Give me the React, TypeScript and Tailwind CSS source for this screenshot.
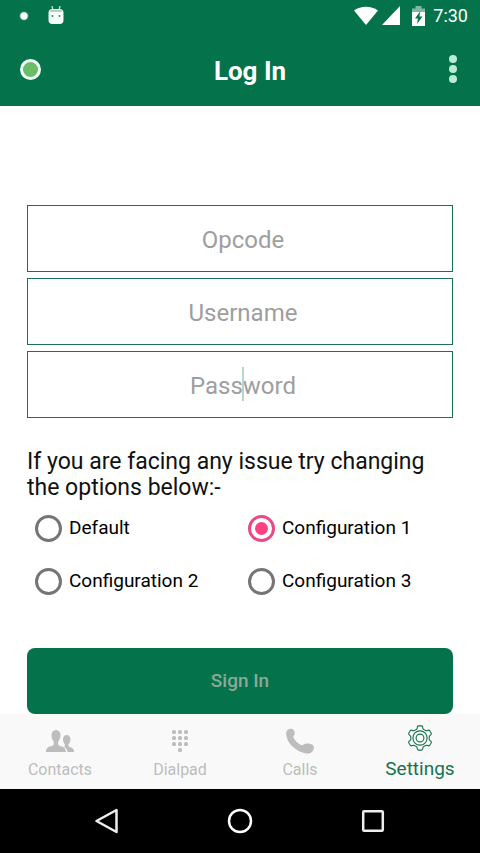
import React, { useState } from 'react';

const fields = [
  { id: 'opcode', label: 'Opcode', type: 'text' },
  { id: 'username', label: 'Username', type: 'text' },
  { id: 'password', label: 'Password', type: 'password' },
];

const options = ['Default', 'Configuration 1', 'Configuration 2', 'Configuration 3'];

const StatusBar = () => (
  <div className="flex h-8 items-center justify-between pr-3 pl-4">
    <div className="flex items-center gap-4">
      <svg width="16" height="16" viewBox="0 0 16 16">
        <circle cx="8" cy="8" r="5" fill="#4d9a7b" opacity="0.5" />
        <circle cx="8" cy="8" r="3.7" fill="#fff" />
      </svg>
      <svg width="16" height="20" viewBox="0 0 16 20">
        <path d="M4 0l1 4M12 0l-1 4" stroke="#d5ede3" strokeWidth="1.2" />
        <rect x="0.5" y="3" width="15" height="15" rx="4" fill="#f4fffb" />
        <path d="M3 3.500h10l1.500 2.500h-13z" fill="#b9cfc5" />
        <circle cx="4.5" cy="10" r="1" fill="#4a7c68" />
        <circle cx="11.5" cy="10" r="1" fill="#4a7c68" />
      </svg>
    </div>
    <div className="flex items-center text-white">
      <svg width="24" height="20" viewBox="0 0 24 20">
        <path d="M0 4.500C7 -0.500 17 -0.500 24 4.500L12 19z" fill="#fff" />
      </svg>
      <svg className="ml-1" width="18" height="20" viewBox="0 0 18 20">
        <path d="M18 0v19H0z" fill="#fff" />
      </svg>
      <svg className="ml-3" width="13" height="20" viewBox="0 0 13 20">
        <path d="M0 2.500h3.500V0h6v2.500H13V7H0z" fill="#7fb8a0" />
        <path d="M0 6h13v14H0z" fill="#fff" />
        <path d="M8 5.500L3 12.500h3L5 18l5.500-7.500h-3z" fill="#04724a" />
      </svg>
      <span className="ml-2 text-lg">7:30</span>
    </div>
  </div>
);

const ContactsIcon = () => (
  <svg width="28" height="22" viewBox="0 0 28 22" fill="currentColor">
    <path d="M10 0C7 0 5.500 2.200 5.500 5c0 3 .8 5 2.200 6.300v2.900c0 1-1.200 1.500-3 2.100C1.500 17.400 0 18.500 0 22h19.800c0-3.500-1.500-4.600-4.700-5.700-1.800-.6-2.900-1.100-2.900-2.100v-2.900c1.400-1.300 2.300-3.300 2.300-6.300C14.500 2.200 13 0 10 0z" />
    <path d="M20.700 5c-2.300 0-3.700 1.800-3.700 4.200 0 2.300.7 3.900 1.800 5v1.500c0 .5-.4.900-1 1.200 2.400 1 3.400 2.500 3.600 5.100H28c0-3-1-3.900-3.500-4.800-1.300-.5-2-.8-2-1.500v-1.500c1.100-1.100 1.900-2.700 1.900-5C24.400 6.800 23 5 20.700 5z" />
  </svg>
);

const DialpadIcon = () => (
  <svg width="18" height="24" viewBox="0 0 18 24" fill="currentColor">
    {[3, 9, 15].map((y) =>
      [3, 9, 15].map((x) => (
        <rect key={`${x}-${y}`} x={x - 2} y={y - 2} width="4" height="4" rx="1.5" />
      ))
    )}
    <rect x="7" y="19" width="4" height="4" rx="1.5" />
  </svg>
);

const CallsIcon = () => (
  <svg width="28" height="26" viewBox="0 0 28 26" fill="currentColor">
    <path d="M1.200 2.300C2.600.7 6 .1 7.500 1.800c1.300 1.500 1.600 4 .6 5.500-.8 1.200-1.100 1.700-.2 3.100 1.600 2.500 4 4.700 6.600 6.300 1.300.8 2 .6 3-.1 2.400-1.600 5.600-1.300 8.300-.2 2.500 1 2.700 4.500.8 6.800-1.300 1.500-3.300 2.500-6 2.300-4.500-.4-9.600-3-13.500-6.500C3.500 15.800 1 11.700.4 8 .1 5.500.1 3.700 1.200 2.300z" />
  </svg>
);

const SettingsIcon = () => (
  <svg
    width="26"
    height="26"
    viewBox="-13 -13 26 26"
    fill="none"
    stroke="currentColor"
    strokeWidth="1.1"
    strokeLinejoin="round"
  >
    {[0, 60, 120, 180, 240, 300].map((angle) => (
      <path
        key={angle}
        transform={`rotate(${angle})`}
        d="M-4.600-7.970L-3.800-8.400Q-2.900-8.900-2.800-9.900L-2.600-11.200Q-2.400-12.100-1.500-12.100H1.500Q2.400-12.100 2.600-11.200L2.800-9.900Q2.900-8.900 3.800-8.400L4.600-7.970"
      />
    ))}
    <circle r="7.100" />
    <circle r="3.900" />
  </svg>
);

const tabs = [
  { label: 'Contacts', Icon: ContactsIcon },
  { label: 'Dialpad', Icon: DialpadIcon },
  { label: 'Calls', Icon: CallsIcon },
  { label: 'Settings', Icon: SettingsIcon },
];

const App = () => {
  const [selected, setSelected] = useState('Configuration 1');
  const activeTab = 'Settings';

  return (
    <div className="flex min-h-screen flex-col bg-white font-[Roboto,sans-serif]">
      <header className="bg-[#04724a]">
        <StatusBar />
        <div className="grid h-[74px] grid-cols-[1fr_auto_1fr] items-center px-5">
          <span className="size-[21px] rounded-full border-3 border-[#effff5] bg-[#6cbb67]" />
          <h1 className="pt-1 pl-5 text-[26px] font-bold text-white">Log In</h1>
          <button type="button" aria-label="More options" className="justify-self-end">
            <svg width="14" height="28" viewBox="0 0 14 28" fill="#b9ecd6">
              <circle cx="7" cy="4" r="4" />
              <circle cx="7" cy="14" r="4" />
              <circle cx="7" cy="24" r="4" />
            </svg>
          </button>
        </div>
      </header>

      <main className="flex-1 px-[27px] pt-[99px]">
        <form onSubmit={(e) => e.preventDefault()}>
          <div className="flex flex-col gap-1.5">
            {fields.map((field) => (
              <div key={field.id} className="relative flex">
                <input
                  id={field.id}
                  type={field.type}
                  placeholder={field.label}
                  aria-label={field.label}
                  className="h-[67px] w-full border border-[#17724f] bg-white pt-0.5 pl-1.5 text-center text-2xl text-black outline-none placeholder:text-[#9e9e9e]"
                />
                {field.id === 'password' && (
                  <span className="absolute top-4 left-1/2 ml-0.5 h-[34px] w-0.5 bg-[#b5d8ca]" />
                )}
              </div>
            ))}
          </div>

          <fieldset>
            <legend className="pt-[31px] text-[23px] leading-[26px] text-[#111]">
              If you are facing any issue try changing the options below:-
            </legend>
            <div className="grid grid-cols-2 pt-px">
              {options.map((option) => (
                <label
                  key={option}
                  className="flex h-[53px] items-center gap-[7px] pl-2 text-[19px] text-black"
                >
                  <input
                    type="radio"
                    name="configuration"
                    checked={selected === option}
                    onChange={() => setSelected(option)}
                    className="grid size-[27px] appearance-none place-items-center rounded-full border-3 border-[#757575] before:size-[13px] before:rounded-full checked:border-[#e94a86] checked:before:bg-[#ff4081]"
                  />
                  {option}
                </label>
              ))}
            </div>
          </fieldset>

          <button
            type="submit"
            className="mt-10 h-[66px] w-full rounded-lg bg-[#04724a] text-[19px] font-medium text-[#8ba898]"
          >
            Sign In
          </button>
        </form>
      </main>

      <nav className="grid h-[75px] grid-cols-4 bg-[#f9f9f9]">
        {tabs.map(({ label, Icon }) => (
          <a
            key={label}
            href="#"
            className={
              label === activeTab
                ? 'flex flex-col items-center pt-3 text-[19px] leading-[38px] text-[#17724f]'
                : 'flex flex-col items-center pt-[15px] text-base leading-[34px] text-[#bdbdbd]'
            }
          >
            <span className="flex h-6 items-center">
              <Icon />
            </span>
            {label}
          </a>
        ))}
      </nav>

      <div className="flex h-16 items-center justify-center gap-[107px] bg-black">
        <button type="button" aria-label="Back">
          <svg width="26" height="26" viewBox="0 0 26 26" fill="none" stroke="#eee" strokeWidth="2.5">
            <path d="M22.500 2v22L2.500 13z" strokeLinejoin="round" />
          </svg>
        </button>
        <button type="button" aria-label="Home">
          <svg width="26" height="26" viewBox="0 0 26 26" fill="none" stroke="#fff" strokeWidth="2.5">
            <circle cx="13" cy="13" r="11" />
          </svg>
        </button>
        <button type="button" aria-label="Recent apps">
          <svg width="26" height="26" viewBox="0 0 26 26" fill="none" stroke="#eee" strokeWidth="2.5">
            <rect x="3.2" y="3.2" width="19.6" height="19.6" rx="1" />
          </svg>
        </button>
      </div>
    </div>
  );
};

export default App;
